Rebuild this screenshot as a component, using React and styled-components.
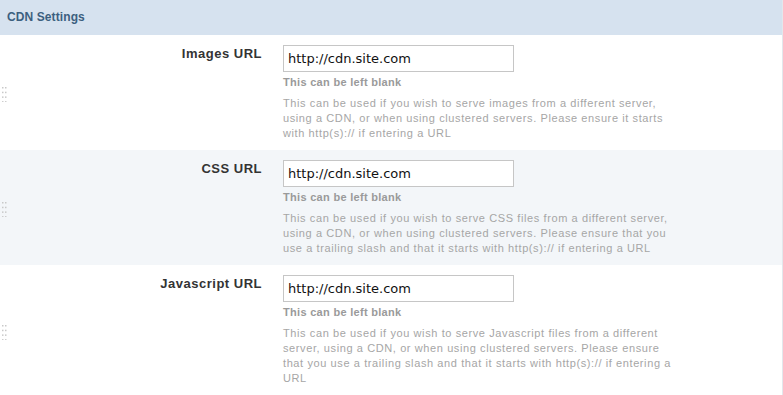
import React from 'react';
import styled, { createGlobalStyle } from 'styled-components';

const GlobalStyle = createGlobalStyle`
    body {
        margin: 0;
        background: #ffffff;
        font-family: "Liberation Sans", Arial, sans-serif;
    }
`;

const settings = [
    {
        label: 'Images URL',
        value: 'http://cdn.site.com',
        desc: 'This can be used if you wish to serve images from a different server, using a CDN, or when using clustered servers. Please ensure it starts with http(s):// if entering a URL',
    },
    {
        label: 'CSS URL',
        value: 'http://cdn.site.com',
        desc: 'This can be used if you wish to serve CSS files from a different server, using a CDN, or when using clustered servers. Please ensure that you use a trailing slash and that it starts with http(s):// if entering a URL',
    },
    {
        label: 'Javascript URL',
        value: 'http://cdn.site.com',
        desc: 'This can be used if you wish to serve Javascript files from a different server, using a CDN, or when using clustered servers. Please ensure that you use a trailing slash and that it starts with http(s):// if entering a URL',
    },
];

const Grip = () => (
    <GripWrap>
        <svg width="8" height="16" viewBox="0 0 8 16">
            {[0, 1, 2, 3].map(r =>
                [0, 1].map(c => (
                    <rect key={r + '-' + c} x={2 + c * 3} y={1 + r * 4.7} width="1.5" height="1.5" fill="#c9c9c9" />
                ))
            )}
        </svg>
    </GripWrap>
);

export default function App() {
    return (
        <Panel>
            <GlobalStyle />
            <Header>CDN Settings</Header>
            {settings.map((s, i) => (
                <Row key={s.label} alt={i % 2 === 1}>
                    <Grip />
                    <Label>{s.label}</Label>
                    <Field>
                        <TextInput defaultValue={s.value} />
                        <HelpTitle>This can be left blank</HelpTitle>
                        <HelpText>{s.desc}</HelpText>
                    </Field>
                </Row>
            ))}
        </Panel>
    );
}

const Panel = styled.div`
    width: 782px;
    height: 395px;
    border-right: 1px solid #e3e7ec;
    overflow: hidden;
`;

const Header = styled.div`
    height: 35px;
    background: #d6e2ef;
    color: #3c5f80;
    font-size: 12px;
    font-weight: bold;
    letter-spacing: 0.1px;
    padding-left: 7px;
    display: flex;
    align-items: center;
    box-sizing: border-box;
    padding-bottom: 2px;
`;

const Row = styled.div`
    display: flex;
    align-items: flex-start;
    background: ${p => (p.alt ? '#f3f6f9' : '#ffffff')};
    padding: 10px 0 9px 0;
    box-sizing: border-box;
`;

const GripWrap = styled.div`
    width: 12px;
    flex-shrink: 0;
    align-self: center;
    display: flex;
    padding-top: 2px;
`;

const Label = styled.div`
    width: 250px;
    flex-shrink: 0;
    text-align: right;
    font-size: 13px;
    line-height: 16px;
    font-weight: bold;
    letter-spacing: 0.5px;
    color: #333333;
    padding-top: 1px;
`;

const Field = styled.div`
    margin-left: 21px;
    width: 392px;
    display: flex;
    flex-direction: column;
`;

const TextInput = styled.input`
    width: 231px;
    height: 27px;
    box-sizing: border-box;
    border: 1px solid #c6c6c6;
    padding: 0 4px;
    font-family: "DejaVu Sans", sans-serif;
    font-size: 13px;
    color: #111111;
    background: #ffffff;
    outline: none;
`;

const HelpTitle = styled.div`
    margin-top: 3px;
    font-size: 11px;
    line-height: 15px;
    font-weight: bold;
    letter-spacing: 0.3px;
    color: #9a9a9a;
`;

const HelpText = styled.div`
    margin-top: 6px;
    font-size: 11px;
    line-height: 15px;
    letter-spacing: 0.6px;
    color: #a6a6a6;
`;
